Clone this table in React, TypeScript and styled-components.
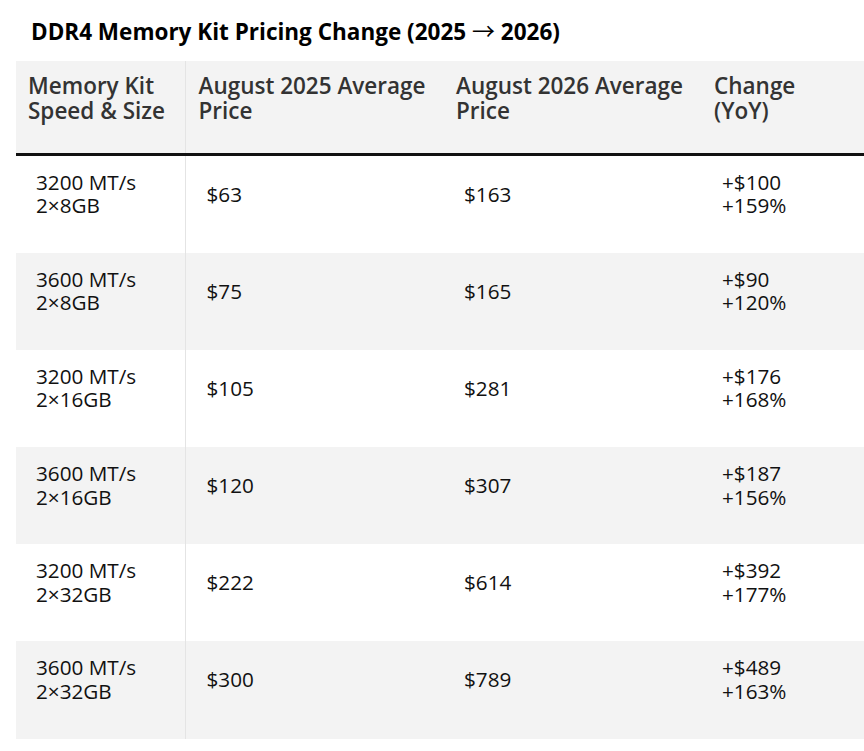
import React from 'react';
import styled, { createGlobalStyle } from 'styled-components';

const GlobalStyle = createGlobalStyle`
  html, body {
    margin: 0;
    padding: 0;
    background: #ffffff;
    overflow: hidden;
  }
  body {
    font-family: 'Open Sans', 'Noto Sans', sans-serif;
    color: #111111;
  }
`;

interface PriceRow {
  speed: string;
  size: string;
  before: string;
  after: string;
  delta: string;
  percent: string;
}

const rows: PriceRow[] = [
  { speed: '3200 MT/s', size: '2×8GB', before: '$63', after: '$163', delta: '+$100', percent: '+159%' },
  { speed: '3600 MT/s', size: '2×8GB', before: '$75', after: '$165', delta: '+$90', percent: '+120%' },
  { speed: '3200 MT/s', size: '2×16GB', before: '$105', after: '$281', delta: '+$176', percent: '+168%' },
  { speed: '3600 MT/s', size: '2×16GB', before: '$120', after: '$307', delta: '+$187', percent: '+156%' },
  { speed: '3200 MT/s', size: '2×32GB', before: '$222', after: '$614', delta: '+$392', percent: '+177%' },
  { speed: '3600 MT/s', size: '2×32GB', before: '$300', after: '$789', delta: '+$489', percent: '+163%' },
];

const Page = styled.div`
  padding: 16px 0 0 16px;
`;

const Title = styled.h2`
  margin: 0 0 14px 15px;
  height: 31px;
  font-size: 22.5px;
  line-height: 31px;
  font-weight: 700;
  color: #000000;
`;

const Arrow = styled.span`
  font-family: 'Noto Sans CJK JP', 'DejaVu Sans', sans-serif;
  font-weight: 400;
  font-size: 23px;
  line-height: 1;
`;

const Scroller = styled.div`
  width: 848px;
  overflow: hidden;
`;

const Table = styled.table`
  border-collapse: collapse;
  table-layout: fixed;
  width: 943px;
`;

const HeadCell = styled.th<{ $first?: boolean }>`
  background: #f3f3f3;
  color: #333333;
  font-size: 22.5px;
  line-height: 25px;
  font-weight: 600;
  text-align: left;
  vertical-align: top;
  padding: 12px 10px 30px ${(p) => (p.$first ? '12px' : '13px')};
  border-bottom: 3px solid #111111;
  border-right: ${(p) => (p.$first ? '1px solid #e4e4e4' : 'none')};
  white-space: nowrap;
`;

const Row = styled.tr<{ $shaded: boolean }>`
  background: ${(p) => (p.$shaded ? '#f3f3f3' : '#ffffff')};
`;

const Cell = styled.td<{ $first?: boolean }>`
  font-size: 20.7px;
  line-height: 23.3px;
  font-weight: 400;
  color: #111111;
  vertical-align: middle;
  padding: 15px 20px 35.5px ${(p) => (p.$first ? '20px' : '21px')};
  border-right: ${(p) => (p.$first ? '1px solid #e4e4e4' : 'none')};
`;

const Line = styled.span`
  display: block;
`;

export default function App() {
  return (
    <Page>
      <GlobalStyle />
      <Title>
        DDR4 Memory Kit Pricing Change (2025 <Arrow>→</Arrow> 2026)
      </Title>
      <Scroller>
        <Table>
          <colgroup>
            <col style={{ width: 169 }} />
            <col style={{ width: 258 }} />
            <col style={{ width: 258 }} />
            <col style={{ width: 258 }} />
          </colgroup>
          <thead>
            <tr>
              <HeadCell $first>
                <Line>Memory Kit</Line>
                <Line>Speed &amp; Size</Line>
              </HeadCell>
              <HeadCell>
                <Line>August 2025 Average</Line>
                <Line>Price</Line>
              </HeadCell>
              <HeadCell>
                <Line>August 2026 Average</Line>
                <Line>Price</Line>
              </HeadCell>
              <HeadCell>
                <Line>Change</Line>
                <Line>(YoY)</Line>
              </HeadCell>
            </tr>
          </thead>
          <tbody>
            {rows.map((r, i) => (
              <Row key={i} $shaded={i % 2 === 1}>
                <Cell $first>
                  <Line>{r.speed}</Line>
                  <Line>{r.size}</Line>
                </Cell>
                <Cell>{r.before}</Cell>
                <Cell>{r.after}</Cell>
                <Cell>
                  <Line>{r.delta}</Line>
                  <Line>{r.percent}</Line>
                </Cell>
              </Row>
            ))}
          </tbody>
        </Table>
      </Scroller>
    </Page>
  );
}
